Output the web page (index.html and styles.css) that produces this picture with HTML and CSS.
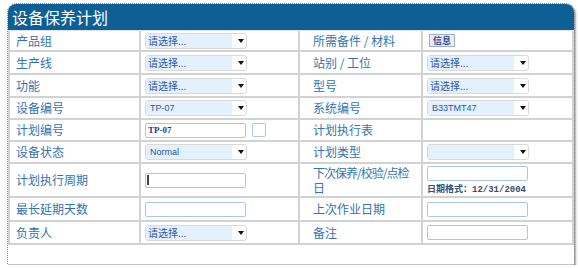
FILE: index.html
```html
<!DOCTYPE html>
<html lang="zh-CN">
<head>
<meta charset="utf-8">
<title>设备保养计划</title>
<link rel="stylesheet" href="styles.css">
</head>
<body>
<div class="panel">
  <div class="title">设备保养计划</div>
  <div class="form">
    <div class="cell lbl l">产品组</div>
    <div class="cell ctl"><span class="sel"><span class="val">请选择...</span><span class="arr"></span></span></div>
    <div class="cell lbl r">所需备件 / 材料</div>
    <div class="cell ctl"><span class="btn">信息</span></div>

    <div class="cell lbl l">生产线</div>
    <div class="cell ctl"><span class="sel"><span class="val">请选择...</span><span class="arr"></span></span></div>
    <div class="cell lbl r">站别 / 工位</div>
    <div class="cell ctl"><span class="sel"><span class="val">请选择...</span><span class="arr"></span></span></div>

    <div class="cell lbl l">功能</div>
    <div class="cell ctl"><span class="sel"><span class="val">请选择...</span><span class="arr"></span></span></div>
    <div class="cell lbl r">型号</div>
    <div class="cell ctl"><span class="sel"><span class="val">请选择...</span><span class="arr"></span></span></div>

    <div class="cell lbl l">设备编号</div>
    <div class="cell ctl"><span class="sel"><span class="val lat">TP-07</span><span class="arr"></span></span></div>
    <div class="cell lbl r">系统编号</div>
    <div class="cell ctl"><span class="sel"><span class="val lat">B33TMT47</span><span class="arr"></span></span></div>

    <div class="cell lbl l">计划编号</div>
    <div class="cell ctl"><span class="inp"><span class="txt">TP-07</span></span><span class="chk"></span></div>
    <div class="cell lbl r">计划执行表</div>
    <div class="cell ctl"></div>

    <div class="cell lbl l">设备状态</div>
    <div class="cell ctl"><span class="sel"><span class="val lat">Normal</span><span class="arr"></span></span></div>
    <div class="cell lbl r">计划类型</div>
    <div class="cell ctl"><span class="sel"><span class="val"></span><span class="arr"></span></span></div>

    <div class="cell lbl l">计划执行周期</div>
    <div class="cell ctl"><span class="inp"><span class="caret"></span></span></div>
    <div class="cell lbl r two"><span>下次保养/校验/点检<br>日</span></div>
    <div class="cell ctl stack"><span class="inp"></span><span class="hint">日期格式：<span class="mono">12/31/2004</span></span></div>

    <div class="cell lbl l">最长延期天数</div>
    <div class="cell ctl"><span class="inp"></span></div>
    <div class="cell lbl r">上次作业日期</div>
    <div class="cell ctl"><span class="inp"></span></div>

    <div class="cell lbl l">负责人</div>
    <div class="cell ctl"><span class="sel"><span class="val">请选择...</span><span class="arr"></span></span></div>
    <div class="cell lbl r">备注</div>
    <div class="cell ctl"><span class="inp"></span></div>
  </div>
  <div class="foot"></div>
</div>
</body>
</html>
```
FILE: styles.css
```css
html, body {
  margin: 0;
  padding: 0;
  background: #ffffff;
}
body {
  padding: 4px 0 0 8px;
  font-family: "Noto Sans CJK SC", "Noto Sans", sans-serif;
}
.panel {
  width: 566px;
  background: #fff;
  outline: 1px dotted #8a8a8a;
  border-radius: 8px 8px 0 0;
  box-shadow: 2px 2px 2px rgba(0, 0, 0, 0.35);
}
.title {
  height: 27px;
  box-sizing: border-box;
  background: #0f5f97;
  color: #fff;
  font-size: 16px;
  line-height: 27px;
  padding-left: 4px;
  border-radius: 8px 8px 0 0;
}
.form {
  display: grid;
  grid-template-columns: 133px 159px 123px 151px;
  grid-template-rows: 21px 23px 23px 22px 22px 22px 34px 24px 23px;
  border-top: 1px solid #e3e3e3;
  margin-top: -1px;
}
.cell {
  box-sizing: border-box;
  border-right: 2px solid #d2d2d2;
  border-bottom: 2px solid #d2d2d2;
  display: flex;
  align-items: center;
  min-width: 0;
}
.cell.l {
  border-left: 2px solid #d2d2d2;
  padding-left: 6px;
}
.cell.r {
  padding-left: 13px;
  white-space: nowrap;
}
.cell.two {
  letter-spacing: -1px;
  line-height: 15px;
}
.lbl {
  color: #3473b0;
  font-size: 12px;
  line-height: 14px;
}
.ctl {
  padding-left: 4px;
}
.stack {
  flex-direction: column;
  align-items: flex-start;
  justify-content: center;
  gap: 3px;
}
.sel {
  display: flex;
  align-items: center;
  width: 102px;
  height: 16px;
  box-sizing: border-box;
  border: 1px solid #d9d9d9;
  border-radius: 3px;
  background: #fff;
}
.val {
  width: 86px;
  height: 14px;
  background: #e4f1fd;
  color: #2a56a8;
  font-size: 10px;
  line-height: 14px;
  padding-left: 2px;
  box-sizing: border-box;
  white-space: nowrap;
  overflow: hidden;
}
.val.lat {
  font-family: "Liberation Sans", sans-serif;
  font-size: 9px;
  padding-left: 4px;
}
.arr {
  width: 0;
  height: 0;
  margin-left: 6px;
  border-left: 3px solid transparent;
  border-right: 3px solid transparent;
  border-top: 4px solid #111;
}
.inp {
  display: flex;
  align-items: center;
  width: 101px;
  height: 15px;
  box-sizing: border-box;
  border: 1px solid #a9c7e6;
  border-radius: 2px;
  background: #fff;
}
.txt {
  font-family: "Liberation Serif", serif;
  font-weight: bold;
  font-size: 9px;
  color: #1f3a7c;
  padding-left: 2px;
}
.caret {
  width: 2px;
  height: 10px;
  margin-left: 1px;
  background: #444;
}
.chk {
  width: 14px;
  height: 14px;
  box-sizing: border-box;
  border: 1px solid #a9c7e6;
  border-radius: 2px;
  margin-left: 6px;
}
.btn {
  margin-left: 2px;
  height: 13px;
  padding: 0 3px;
  box-sizing: border-box;
  border: 1px solid #93b3da;
  background: #f1e7ee;
  color: #2a4b98;
  font-size: 9px;
  font-weight: bold;
  line-height: 11px;
}
.hint {
  color: #3b4c6e;
  font-size: 9px;
  font-weight: bold;
  line-height: 10px;
  white-space: nowrap;
}
.mono {
  font-family: "Liberation Mono", monospace;
  font-size: 9px;
}
.foot {
  height: 20px;
  box-sizing: border-box;
  border-bottom: 1px solid #c4c4c4;
}
```
